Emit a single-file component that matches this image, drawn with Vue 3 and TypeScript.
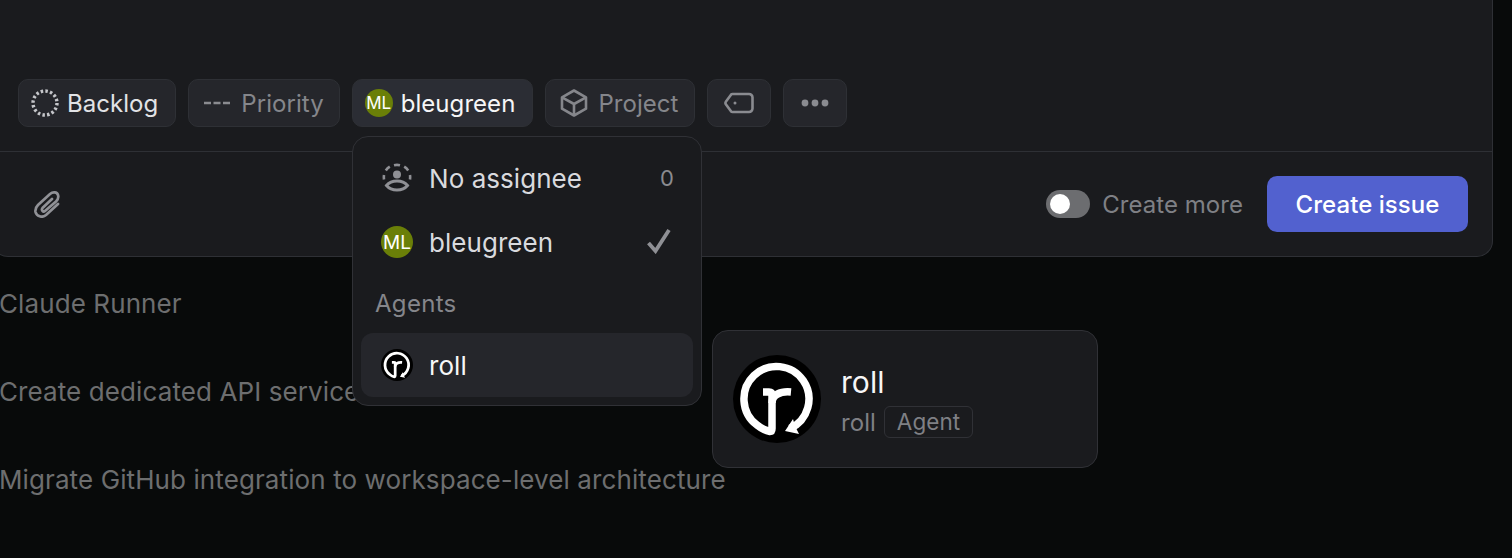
<script setup lang="ts">
// Issue composer with the assignee menu open
interface Row {
  id: number
  text: string
}

const rows: Row[] = [
  { id: 1, text: 'Claude Runner' },
  { id: 2, text: 'Create dedicated API service' },
  { id: 3, text: 'Migrate GitHub integration to workspace-level architecture' },
]
</script>

<template>
  <div class="page">
    <section class="composer">
      <div class="pills">
        <button class="pill backlog">
          <svg viewBox="0 0 28 28" width="28" height="28"><circle cx="14" cy="14" r="12" fill="none" stroke="#c5c6ca" stroke-width="3.400" stroke-dasharray="2.500 2.212" /></svg>
          <span class="strong">Backlog</span>
        </button>
        <button class="pill priority">
          <svg viewBox="0 0 28 28" width="28" height="28"><path d="M1 14h7M10.500 14h7M20 14h7" stroke="#8a8b90" stroke-width="2.400" fill="none" /></svg>
          <span class="muted">Priority</span>
        </button>
        <button class="pill active">
          <span class="avatar small">ML</span>
          <span class="bright">bleugreen</span>
        </button>
        <button class="pill project">
          <svg viewBox="0 0 28 28" width="28" height="28" fill="none" stroke="#85868b" stroke-width="2.600" stroke-linejoin="round"><path d="M14 1.500l12 6.800v11.400l-12 6.800-12-6.800V8.300z" /><path d="M2 8.300L14 15l12-6.700M14 15v11.500" /></svg>
          <span class="muted">Project</span>
        </button>
        <button class="pill square">
          <svg viewBox="0 0 30 22" width="30" height="22" fill="none" stroke="#8a8b90" stroke-width="2.600" stroke-linejoin="round"><path d="M8.500 2H25a3.500 3.500 0 0 1 3.500 3.500v11A3.500 3.500 0 0 1 25 20H8.500a2 2 0 0 1-1.500-.7L2 12.500a2.500 2.500 0 0 1 0-3L7 2.700A2 2 0 0 1 8.500 2z" /><circle cx="11" cy="11" r="1.500" fill="#8a8b90" stroke="none" /></svg>
        </button>
        <button class="pill square">
          <svg viewBox="0 0 28 8" width="28" height="8" fill="#8a8b90"><circle cx="4" cy="4" r="3.400" /><circle cx="14" cy="4" r="3.400" /><circle cx="24" cy="4" r="3.400" /></svg>
        </button>
      </div>
      <footer class="foot">
        <svg class="clip" viewBox="0 0 28 28" width="28" height="28" fill="none" stroke="#909196" stroke-width="2.700" stroke-linecap="round"><path d="M25 14L13 25c-4 3.500-9.500 1-10.500-3-.5-3 .5-5 2.500-7L17 4c3-2.500 7-2 8 1 1 3 0 4.500-2 6.500L12 21c-2 1.500-4-1-2.500-3L19 9" /></svg>
        <div class="create-more">
          <span class="toggle"><span class="knob"></span></span>
          <span>Create more</span>
        </div>
        <button class="primary">Create issue</button>
      </footer>
    </section>

    <ul class="list">
      <li v-for="row in rows" :key="row.id">{{ row.text }}</li>
    </ul>

    <div class="menu">
      <div class="item">
        <svg viewBox="0 0 32 32" width="32" height="32" fill="none" stroke="#8f9095" stroke-width="2.600">
          <path d="M13 3.200a13 13 0 0 1 6 0M4.800 8.500a13 13 0 0 1 4-3.800M27.200 8.500a13 13 0 0 0-4-3.800M3 17.500a13 13 0 0 1 0-4.500M29 17.500a13 13 0 0 0 0-4.500" />
          <circle cx="16" cy="12.500" r="4" fill="#8f9095" stroke="none" />
          <path d="M5.500 23.500c2.500-3 6.500-4.500 10.500-4.500s8 1.500 10.500 4.500c-2.500 3-6.500 4.500-10.500 4.500s-8-1.500-10.500-4.500z" stroke-width="3" />
        </svg>
        <span class="label">No assignee</span>
        <span class="count">0</span>
      </div>
      <div class="item">
        <span class="avatar">ML</span>
        <span class="label">bleugreen</span>
        <svg class="check" viewBox="0 0 24 26" width="24" height="26" fill="none" stroke="#8f9095" stroke-width="3.800"><path d="M1.500 15l7 8L22 2" /></svg>
      </div>
      <div class="group">Agents</div>
      <div class="item hover">
        <svg viewBox="0 0 88 88" width="32" height="32"><use href="#roll-logo" /></svg>
        <span class="label bright">roll</span>
      </div>
    </div>

    <div class="card">
      <svg viewBox="0 0 88 88" width="88" height="88">
        <g id="roll-logo">
          <circle cx="44" cy="44" r="44" fill="#000" />
          <g fill="none" stroke="#fff" stroke-width="7.500" stroke-linejoin="round">
            <path d="M57 73.500A32.500 32.500 0 1 0 24 70c5 4 10 6 13 6.500 1.500 0 2-1 2-3V40c0-2-1-3-3-3h-6" />
            <path d="M39 48c0-8 8-12 19-11" stroke-width="7.500" />
          </g>
          <path d="M52 76l8-12 2 7 4 8z" fill="#fff" />
        </g>
      </svg>
      <div class="card-body">
        <div class="card-name">roll</div>
        <div class="card-sub">
          <span>roll</span>
          <span class="badge">Agent</span>
        </div>
      </div>
    </div>
  </div>
</template>

<style>
html,
body {
  margin: 0;
  background: #080a0a;
}
</style>

<style scoped>
.page {
  position: relative;
  width: 1512px;
  height: 558px;
  overflow: hidden;
  background: #080a0a;
  font-family: Inter, 'Liberation Sans', sans-serif;
  font-size: 24px;
  letter-spacing: 0.05px;
  color: #e2e3e6;
}

.composer {
  width: 1501px;
  height: 257px;
  margin-left: -8px;
  box-sizing: border-box;
  background: #1a1b1e;
  border: 1px solid #2e3035;
  border-top: 0;
  border-radius: 0 0 16px 16px;
  display: flex;
  flex-direction: column;
}

.pills {
  display: flex;
  gap: 12px;
  height: 152px;
  box-sizing: border-box;
  padding: 79px 0 0 25px;
  border-bottom: 1px solid #2e3035;
}

.pill {
  display: flex;
  align-items: center;
  gap: 8px;
  height: 48px;
  box-sizing: border-box;
  padding: 0 16px 0 12px;
  background: #25262b;
  border: 1px solid #2e3035;
  border-radius: 10px;
  font: inherit;
  letter-spacing: inherit;
  color: inherit;
}

.pill.backlog {
  padding-right: 17px;
}

.pill.active {
  background: #2b2d34;
  padding-right: 17px;
}

.pill.priority {
  padding: 0 15px 0 14px;
  gap: 10px;
}

.pill.project {
  padding-left: 14px;
  gap: 10px;
}

.pill.square {
  width: 64px;
  padding: 0;
  justify-content: center;
}

.strong {
  color: #e2e3e6;
}

.muted {
  color: #85868b;
}

.bright {
  color: #f6f6f7;
}

.avatar {
  width: 32px;
  height: 32px;
  border-radius: 50%;
  background: #6a7f08;
  color: #fff;
  font-size: 19px;
  letter-spacing: 0;
  display: flex;
  align-items: center;
  justify-content: center;
  flex: none;
}

.avatar.small {
  width: 28px;
  height: 28px;
  font-size: 17px;
}

.foot {
  flex: 1;
  display: flex;
  align-items: center;
  padding: 0 24px 0 40px;
}

.clip {
  margin-right: auto;
}

.create-more {
  display: flex;
  align-items: center;
  gap: 12px;
  margin-right: 24px;
  color: #7f8085;
}

.toggle {
  width: 44px;
  height: 28px;
  border-radius: 14px;
  background: #6c6d70;
  display: flex;
  align-items: center;
  padding-left: 4px;
  box-sizing: border-box;
}

.knob {
  width: 20px;
  height: 20px;
  border-radius: 50%;
  background: #fff;
}

.primary {
  width: 201px;
  height: 56px;
  border: 0;
  border-radius: 10px;
  background: #5261cf;
  color: #fff;
  font: inherit;
  letter-spacing: inherit;
  font-weight: 500;
}

.list {
  list-style: none;
  margin: 0 0 0 -1px;
  padding: 0;
  color: #6d6e6f;
  font-size: 26px;
  letter-spacing: 0.1px;
}

.list li {
  height: 88px;
  padding-top: 32px;
  box-sizing: border-box;
  line-height: 30px;
  white-space: nowrap;
}

.menu {
  position: absolute;
  left: 352px;
  top: 136px;
  width: 350px;
  height: 270px;
  box-sizing: border-box;
  padding: 9px 8px 8px;
  background: #1a1b1e;
  border: 1px solid #303136;
  border-radius: 16px;
  display: flex;
  flex-direction: column;
  font-size: 26px;
}

.item {
  height: 64px;
  display: flex;
  align-items: center;
  gap: 16px;
  padding: 0 19px 0 20px;
  border-radius: 12px;
  flex: none;
}

.label {
  flex: 1;
  color: #d9dade;
}

.label.bright {
  color: #f6f6f7;
}

.count {
  color: #8a8b90;
  font-size: 22px;
}

.check {
  margin: -2px 3px 0 0;
}

.group {
  height: 59px;
  line-height: 60px;
  padding-left: 14px;
  color: #85868b;
  font-size: 24px;
  letter-spacing: 0.3px;
  flex: none;
}

.item.hover {
  background: #25262b;
}

.card {
  position: absolute;
  left: 712px;
  top: 330px;
  width: 386px;
  height: 138px;
  box-sizing: border-box;
  padding: 0 20px;
  background: #1a1b1e;
  border: 1px solid #303136;
  border-radius: 16px;
  display: flex;
  align-items: center;
  gap: 20px;
}

.card-body {
  margin-top: 5px;
}

.card-name {
  font-size: 30px;
  color: #f6f6f7;
  line-height: 34px;
}

.card-sub {
  display: flex;
  align-items: center;
  gap: 8px;
  margin-top: 7px;
  color: #7f8085;
  font-size: 24px;
}

.badge {
  height: 32px;
  box-sizing: border-box;
  padding: 0 12px;
  line-height: 30px;
  border: 1px solid #303136;
  border-radius: 6px;
  font-size: 22.500px;
}
</style>
